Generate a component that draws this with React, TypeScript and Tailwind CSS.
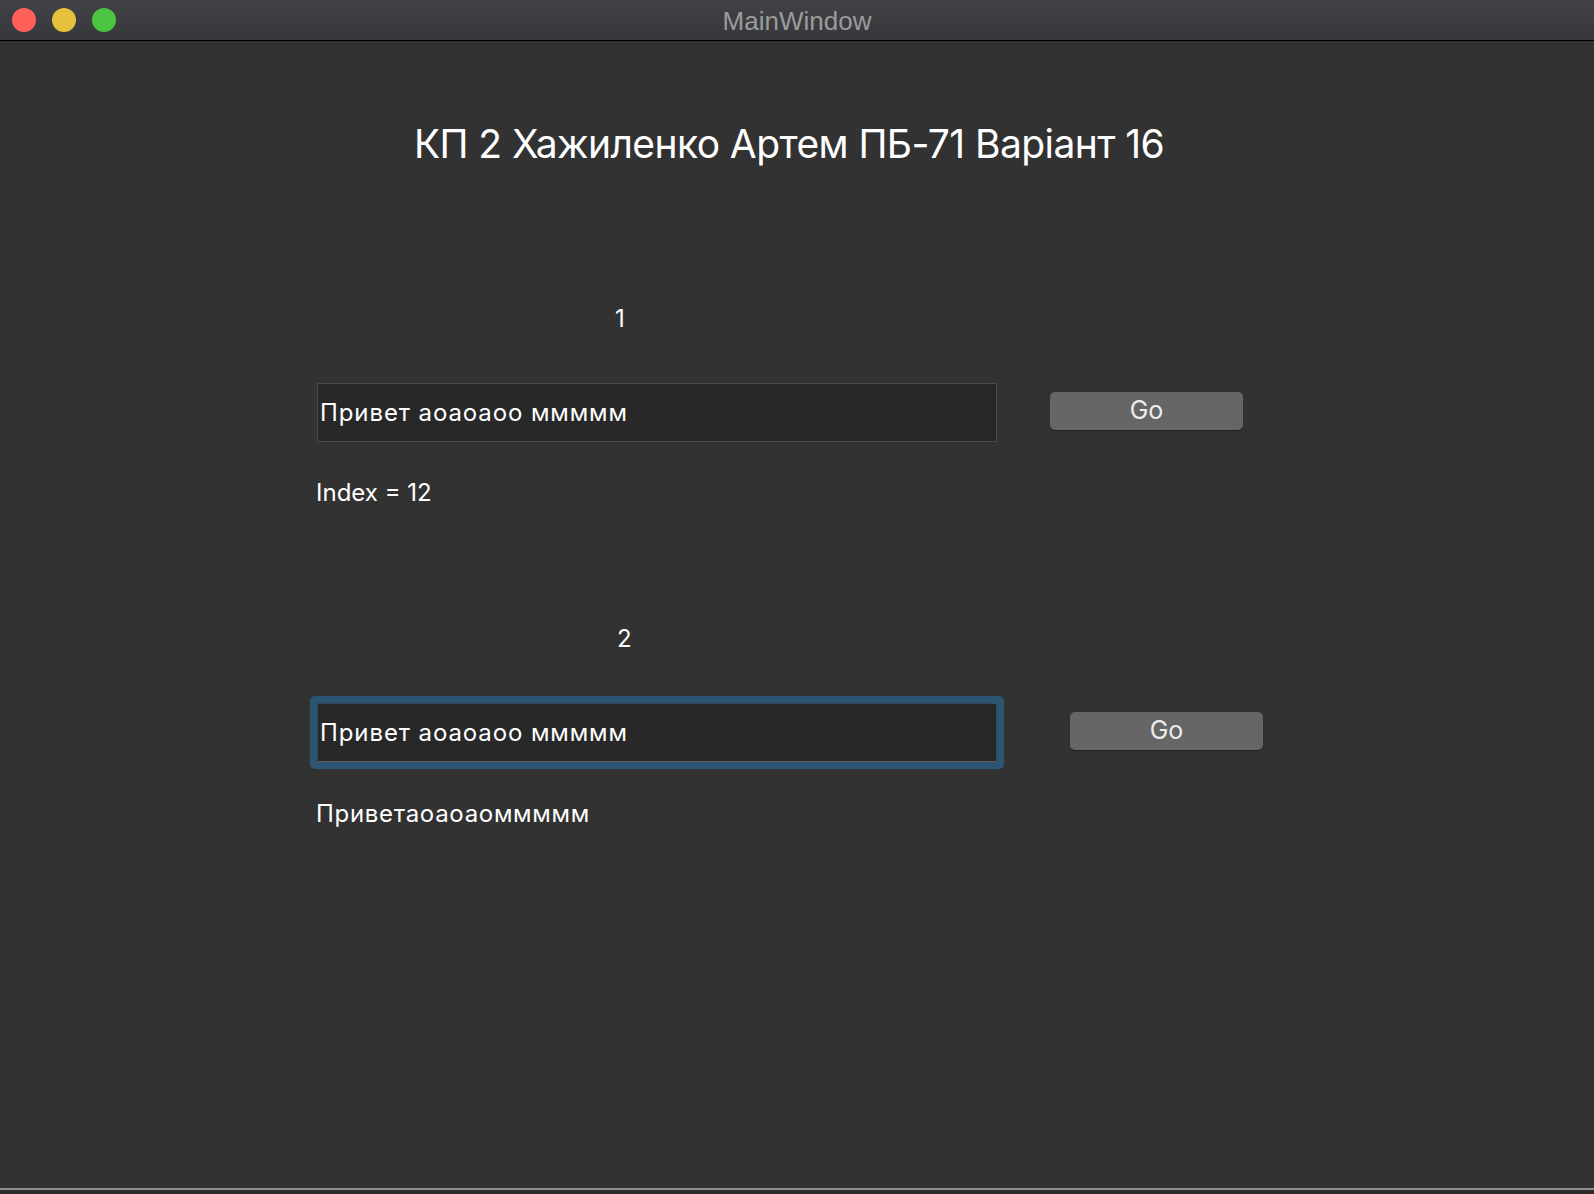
// App.tsx — MainWindow (Qt, macOS dark): два поля вводу з кнопками Go.
import { useState } from 'react';

const font = { fontFamily: 'Inter, "Liberation Sans", Arial, sans-serif' };

function TrafficLights() {
  return (
    <div className="flex items-center gap-[16px] pl-[12px]">
      <span className="h-[24px] w-[24px] rounded-full bg-[#fe5f57]" />
      <span className="h-[24px] w-[24px] rounded-full bg-[#e7c03c]" />
      <span className="h-[24px] w-[24px] rounded-full bg-[#4bc441]" />
    </div>
  );
}

function GoButton({ onClick, className = '' }: { onClick: () => void; className?: string }) {
  return (
    <button
      type="button"
      onClick={onClick}
      className={`mb-[4px] h-[38px] w-[193px] shrink-0 rounded-[5px] bg-[#666666] text-[25px] leading-none text-[#ececec] shadow-[0_1px_1px_rgba(0,0,0,0.35)] ${className}`}
    >
      Go
    </button>
  );
}

export default function App() {
  const [first, setFirst] = useState('Привет аоаоаоо ммммм');
  const [second, setSecond] = useState('Привет аоаоаоо ммммм');
  const [index, setIndex] = useState(12);
  const [joined, setJoined] = useState('Приветаоаоаоммммм');

  return (
    <div className="flex h-[1194px] w-[1594px] flex-col overflow-hidden bg-[#323232] text-white" style={font}>
      {/* title bar */}
      <div className="relative flex h-[41px] shrink-0 items-center border-b border-black bg-gradient-to-b from-[#414246] to-[#37383b]">
        <TrafficLights />
        <span
          className="absolute left-0 right-0 top-[6px] text-center text-[26px] leading-[30px] text-[#9b9b9b]"
          style={{ fontFamily: '"Liberation Sans", Arial, sans-serif' }}
        >
          MainWindow
        </span>
      </div>

      <main className="flex-1 pl-[315px]">
        <h1 className="ml-[-315px] mt-[80px] pr-[16px] text-center text-[39px] font-normal leading-[46px] tracking-[-0.015em]">
          КП 2 Хажиленко Артем ПБ-71 Варіант 16
        </h1>

        <p className="mt-[138px] pl-[300px] text-[24px] leading-[28px]">1</p>
        <div className="mt-[50px] flex items-center">
          <input
            value={first}
            onChange={(e) => setFirst(e.target.value)}
            className="ml-[2px] h-[59px] w-[680px] border border-[#4b4b4b] bg-[#282828] pl-[2px] text-[24px] tracking-[0.9px] text-white outline-none"
          />
          <GoButton className="ml-[53px]" onClick={() => setIndex(first.indexOf('м') >= 0 ? first.indexOf('м') : -1)} />
        </div>
        <p className="mt-[37px] pl-[1px] text-[24px] leading-[28px]">Index = {index}</p>

        <p className="mt-[118px] pl-[302px] text-[24px] leading-[28px]">2</p>
        <div className="mt-[43px] flex items-center">
          <div className="ml-[-5px] rounded-[5px] bg-[#2b5573] p-[7px]">
            <input
              value={second}
              onChange={(e) => setSecond(e.target.value)}
              className="block h-[59px] w-[680px] border border-[#34495a] border-b-[#5a5a5a] bg-[#282828] pl-[2px] text-[24px] tracking-[0.9px] text-white outline-none"
            />
          </div>
          <GoButton className="ml-[66px]" onClick={() => setJoined(second.replace(/\s+/g, ''))} />
        </div>
        <p className="mt-[31px] pl-[1px] text-[24px] leading-[28px] tracking-[0.7px]">{joined}</p>
      </main>

      <div className="h-[2px] shrink-0 bg-[#8d8d8d]" />
      <div className="h-[4px] shrink-0 bg-[#2b2b2b]" />
    </div>
  );
}
